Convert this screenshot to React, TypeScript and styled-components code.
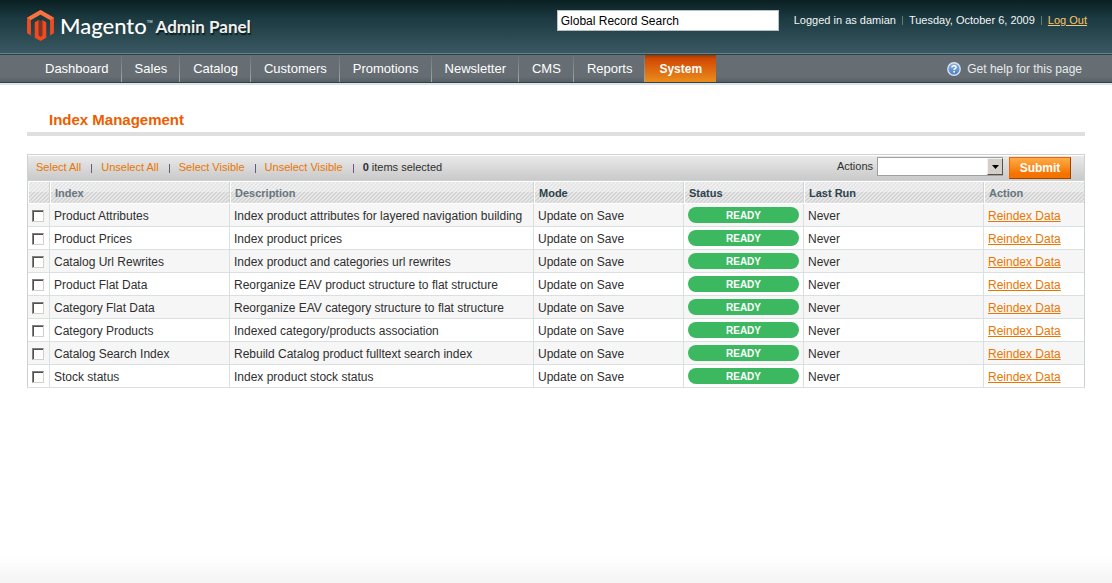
import React from 'react';
import styled, { createGlobalStyle } from 'styled-components';

const Global = createGlobalStyle`
  * { box-sizing: border-box; }
  body {
    margin: 0;
    background: #fff;
    color: #2f2f2f;
    font-family: "Liberation Sans", Arial, sans-serif;
    font-size: 12px;
    line-height: 16px;
  }
  input, select, button { font-family: inherit; margin: 0; }
`;

const Page = styled.div`
  display: flex;
  flex-direction: column;
  min-height: 100vh;
`;

const Header = styled.header`
  display: flex;
  justify-content: space-between;
  height: 54px;
  padding: 10px 25px 0 27px;
  background: linear-gradient(#0a2022, #1c3a41 35%, #3a5861);
  border-bottom: 1px solid #66838b;
`;

const Logo = styled.a`
  display: flex;
  align-items: flex-start;
  height: 32px;
  color: #fff;
  text-decoration: none;
  white-space: nowrap;
`;

const LogoMark = styled.svg`
  width: 27px;
  height: 31px;
  margin-right: 6px;
`;

const Brand = styled.span`
  font-family: Lato, sans-serif;
  font-size: 22px;
  font-weight: 500;
  line-height: 32px;
`;

const Trademark = styled.span`
  margin-right: 3px;
  font-size: 4px;
  line-height: 24px;
`;

const Product = styled.span`
  font-family: Lato, "Liberation Sans", sans-serif;
  font-size: 17px;
  font-weight: 700;
  line-height: 34px;
  color: #f0f0ee;
  text-shadow: 1px 2px 1px #0a1c20;
`;

const HeaderTools = styled.div`
  display: flex;
  align-items: flex-start;
  white-space: nowrap;
`;

const SearchBox = styled.input`
  width: 222px;
  height: 21px;
  margin-right: 15px;
  padding: 0 3px;
  border: 1px solid #b9c0c4;
  border-radius: 0;
  background: #fff;
  color: #000;
  font-size: 12px;
`;

const UserInfo = styled.p`
  display: flex;
  margin: 0;
  padding-top: 2px;
  font-size: 11px;
  color: #f2f5f6;
`;

const InfoDivider = styled.span`
  width: 1px;
  height: 9px;
  margin: 4px 6px 0;
  background: #5f7f6d;
`;

const LogOut = styled.a`
  color: #fbc46b;
  text-decoration: underline;
`;

const Nav = styled.nav`
  display: flex;
  justify-content: space-between;
  height: 29px;
  padding: 0 30px 0 32px;
  border-top: 1px solid #24434d;
  border-bottom: 1px solid #2a444e;
  background: linear-gradient(#666e73, #666e73 80%, #565f65);
  box-shadow: 0 2px 0 #dfe3e4;
`;

const Menu = styled.ul`
  display: flex;
  margin: 0;
  padding: 0;
  list-style: none;
`;

const MenuItem = styled.li`
  border-right: 1px solid;
  border-image: linear-gradient(#6b7378, #a3a9ac) 1;
  &:last-child { border-right: 0; }
`;

const MenuLink = styled.a<{ $active?: boolean }>`
  display: block;
  height: 27px;
  padding: ${p => (p.$active ? '0 14px' : '0 12px 0 13px')};
  font-size: ${p => (p.$active ? 12 : 13)}px;
  font-weight: ${p => (p.$active ? 700 : 400)};
  line-height: 28px;
  color: #fff;
  text-decoration: none;
  background: ${p => (p.$active ? 'linear-gradient(#9a3a00, #d24a04 15%, #ea8d1c)' : 'none')};
`;

const Help = styled.a`
  display: flex;
  align-items: center;
  gap: 6px;
  color: #e6eaec;
  text-decoration: none;
`;

const Main = styled.main`
  flex: 1;
  padding: 28px 27px 0;
`;

const Title = styled.h1`
  margin: 0 0 18px;
  padding: 0 22px 3px;
  border-bottom: 4px solid #dfdfdf;
  color: #eb5e00;
  font-size: 15px;
  line-height: 18px;
`;

const Grid = styled.section`
  border: 1px solid #cbd3d4;
  border-bottom: 0;
`;

const Toolbar = styled.div`
  display: flex;
  justify-content: space-between;
  height: 26px;
  padding: 1px 13px 0 8px;
  border-top: 1px solid #fff;
  border-bottom: 1px solid #cbd3d4;
  background: linear-gradient(#e9e9e9, #c9c9c9);
  font-size: 11px;
  line-height: 20px;
`;

const Selection = styled.div`
  display: flex;
  align-items: flex-start;
`;

const TextLink = styled.a`
  color: #ea7601;
  text-decoration: none;
`;

const Bar = styled.span`
  width: 1px;
  height: 9px;
  margin: 7px 9px 0 10px;
  background: #6d5680;
`;

const Actions = styled.form`
  display: flex;
  align-items: flex-start;
`;

const ActionsLabel = styled.label`
  line-height: 18px;
  margin-right: 4px;
`;

const SelectWrap = styled.span`
  position: relative;
  display: block;
  width: 126px;
  height: 19px;
  margin-right: 6px;
`;

const Select = styled.select`
  appearance: none;
  display: block;
  width: 100%;
  height: 100%;
  padding: 0 20px 0 4px;
  border: 1px solid #a0a0a0;
  border-radius: 0;
  background: #fff;
  font-size: 11px;
`;

const SelectArrow = styled.span`
  position: absolute;
  top: 1px;
  right: 0;
  display: flex;
  align-items: center;
  justify-content: center;
  width: 16px;
  height: 17px;
  border: 1px solid;
  border-color: #f4f2ee #55524e #55524e #f4f2ee;
  background: #d4d0c8;
  pointer-events: none;
`;

const Submit = styled.button`
  width: 62px;
  height: 22px;
  padding: 0;
  border: 1px solid;
  border-color: #ed6502 #a04300 #a04300 #ed6502;
  background: linear-gradient(#ffac47, #f47200 80%);
  color: #fff;
  font-size: 12px;
  font-weight: 700;
  line-height: 20px;
`;

const Table = styled.table`
  width: 100%;
  table-layout: fixed;
  border-collapse: separate;
  border-spacing: 0;
`;

const Col = styled.col<{ $w?: number }>`
  width: ${p => (p.$w ? `${p.$w}px` : 'auto')};
`;

const Th = styled.th<{ $plain?: boolean }>`
  height: 23px;
  padding: 0 4px;
  border: 1px solid #fff;
  border-width: 1px 0 1px 1px;
  box-shadow: inset -1px 0 0 #cfd3d3;
  background:
    linear-gradient(135deg, rgba(255, 255, 255, 0.45) 25%, transparent 25% 50%, rgba(255, 255, 255, 0.45) 50% 75%, transparent 75%) 0 0 / 4px 4px,
    linear-gradient(#e4e4e4 0 10px, #d4d4d4 10px);
  color: ${p => (p.$plain ? '#67767e' : '#2d444f')};
  font-size: 11px;
  text-align: left;
  &:last-child { box-shadow: none; }
`;

const Row = styled.tr`
  background: #fff;
  &:nth-child(odd) { background: #f6f6f6; }
`;

const Td = styled.td`
  height: 23px;
  padding: 2px 4px 0;
  border-right: 1px solid #dadfe0;
  border-bottom: 1px solid #dadfe0;
  white-space: nowrap;
  &:last-child { border-right: 0; }
`;

const Check = styled.input`
  appearance: none;
  display: block;
  width: 12px;
  height: 12px;
  border: 1px solid;
  border-color: #808080 #d4d0c8 #d4d0c8 #808080;
  background: #fff;
  box-shadow: inset 1px 1px 0 #505050;
  &:checked { background: #ea7601; }
`;

const Badge = styled.span`
  display: block;
  height: 16px;
  margin-bottom: 2px;
  border-radius: 8px;
  background: #3cb861;
  color: #fff;
  font-size: 10px;
  font-weight: 700;
  line-height: 17px;
  text-align: center;
`;

const Reindex = styled.a`
  color: #ea7601;
  text-decoration: underline;
`;

const FooterFade = styled.div`
  height: 26px;
  background: linear-gradient(#fff, #f4f4f4);
`;

const menu = ['Dashboard', 'Sales', 'Catalog', 'Customers', 'Promotions', 'Newsletter', 'CMS', 'Reports', 'System'];

const selectors = ['Select All', 'Unselect All', 'Select Visible', 'Unselect Visible'];

const columns = [
  { name: 'Index', plain: true },
  { name: 'Description', plain: true },
  { name: 'Mode', plain: false },
  { name: 'Status', plain: false },
  { name: 'Last Run', plain: false },
  { name: 'Action', plain: true },
];

const rows = [
  ['Product Attributes', 'Index product attributes for layered navigation building'],
  ['Product Prices', 'Index product prices'],
  ['Catalog Url Rewrites', 'Index product and categories url rewrites'],
  ['Product Flat Data', 'Reorganize EAV product structure to flat structure'],
  ['Category Flat Data', 'Reorganize EAV category structure to flat structure'],
  ['Category Products', 'Indexed category/products association'],
  ['Catalog Search Index', 'Rebuild Catalog product fulltext search index'],
  ['Stock status', 'Index product stock status'],
];

function HelpIcon() {
  return (
    <svg width="14" height="14" viewBox="0 0 14 14" aria-hidden="true">
      <defs>
        <linearGradient id="helpFill" x1="0" y1="0" x2="0" y2="1">
          <stop offset="0" stopColor="#8fb3e0" />
          <stop offset="1" stopColor="#4a7dbd" />
        </linearGradient>
      </defs>
      <circle cx="7" cy="7" r="6.2" fill="url(#helpFill)" stroke="#d3e2f5" strokeWidth="1.4" />
      <path d="M5 5.6C5 4.3 5.9 3.7 7 3.7s2 .7 2 1.7c0 1.2-1.9 1.4-1.9 2.7" fill="none" stroke="#fff" strokeWidth="1.5" />
      <rect x="6.3" y="9" width="1.6" height="1.6" fill="#fff" />
    </svg>
  );
}

export default function App() {
  return (
    <Page>
      <Global />
      <Header>
        <Logo href="#" aria-label="Magento Admin Panel">
          <LogoMark viewBox="1.6 0 20.8 24" aria-hidden="true">
            <path d="M22.391 6v12l-2.969 1.714V7.713L12 3.43 4.574 7.713v12.001L1.609 18V6L12 0l10.391 6z" fill="#ee4d22" />
            <path d="M1.609 6 12 0l10.391 6-2.969 1.713L12 3.43 4.574 7.713z" fill="#f4733f" />
            <path d="M10.515 7.713 12 8.6l1.485-.887v12.001l-1.485.902-1.485-.902z" fill="#7e3526" />
            <path d="M12 24l-4.455-2.572v-12l2.97-1.715v12.001l1.485.902 1.485-.902V7.713l2.971 1.715v12L12 24z" fill="#f04a20" />
          </LogoMark>
          <Brand>Magento</Brand>
          <Trademark>TM</Trademark>
          <Product>Admin Panel</Product>
        </Logo>
        <HeaderTools>
          <SearchBox type="text" aria-label="Global Record Search" defaultValue="Global Record Search" />
          <UserInfo>
            Logged in as damian
            <InfoDivider />
            Tuesday, October 6, 2009
            <InfoDivider />
            <LogOut href="#">Log Out</LogOut>
          </UserInfo>
        </HeaderTools>
      </Header>
      <Nav>
        <Menu>
          {menu.map(name => (
            <MenuItem key={name}>
              <MenuLink href="#" $active={name === 'System'}>{name}</MenuLink>
            </MenuItem>
          ))}
        </Menu>
        <Help href="#">
          <HelpIcon />
          Get help for this page
        </Help>
      </Nav>
      <Main>
        <Title>Index Management</Title>
        <Grid>
          <Toolbar>
            <Selection>
              {selectors.map(name => (
                <React.Fragment key={name}>
                  <TextLink href="#">{name}</TextLink>
                  <Bar />
                </React.Fragment>
              ))}
              <span><strong>0</strong> items selected</span>
            </Selection>
            <Actions onSubmit={e => e.preventDefault()}>
              <ActionsLabel htmlFor="mass-action">Actions</ActionsLabel>
              <SelectWrap>
                <Select id="mass-action" defaultValue="">
                  <option value="" />
                </Select>
                <SelectArrow>
                  <svg width="7" height="4" viewBox="0 0 7 4" aria-hidden="true">
                    <path d="M0 0h7L3.5 4z" fill="#000" />
                  </svg>
                </SelectArrow>
              </SelectWrap>
              <Submit type="submit">Submit</Submit>
            </Actions>
          </Toolbar>
          <Table>
            <colgroup>
              <Col $w={22} />
              <Col $w={180} />
              <Col />
              <Col $w={150} />
              <Col $w={120} />
              <Col $w={180} />
              <Col $w={100} />
            </colgroup>
            <thead>
              <tr>
                <Th aria-label="Selected" />
                {columns.map(c => (
                  <Th key={c.name} $plain={c.plain}>{c.name}</Th>
                ))}
              </tr>
            </thead>
            <tbody>
              {rows.map(([name, description]) => (
                <Row key={name}>
                  <Td><Check type="checkbox" aria-label={name} /></Td>
                  <Td>{name}</Td>
                  <Td>{description}</Td>
                  <Td>Update on Save</Td>
                  <Td><Badge>READY</Badge></Td>
                  <Td>Never</Td>
                  <Td><Reindex href="#">Reindex Data</Reindex></Td>
                </Row>
              ))}
            </tbody>
          </Table>
        </Grid>
      </Main>
      <FooterFade />
    </Page>
  );
}
